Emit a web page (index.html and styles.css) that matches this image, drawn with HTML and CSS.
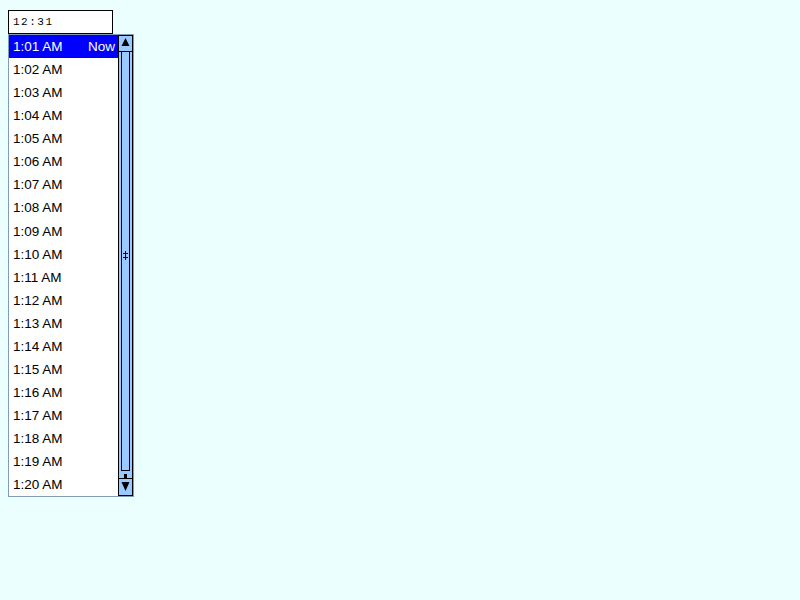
FILE: index.html
```html
<!DOCTYPE html>
<html>
<head>
<meta charset="utf-8">
<link rel="stylesheet" href="styles.css">
</head>
<body>
<div class="picker">
  <div class="field">12:31</div>
  <div class="list">
    <div class="rows">
      <div class="row sel"><span>1:01 AM</span><span>Now</span></div>
      <div class="row"><span>1:02 AM</span></div>
      <div class="row"><span>1:03 AM</span></div>
      <div class="row"><span>1:04 AM</span></div>
      <div class="row"><span>1:05 AM</span></div>
      <div class="row"><span>1:06 AM</span></div>
      <div class="row"><span>1:07 AM</span></div>
      <div class="row"><span>1:08 AM</span></div>
      <div class="row"><span>1:09 AM</span></div>
      <div class="row"><span>1:10 AM</span></div>
      <div class="row"><span>1:11 AM</span></div>
      <div class="row"><span>1:12 AM</span></div>
      <div class="row"><span>1:13 AM</span></div>
      <div class="row"><span>1:14 AM</span></div>
      <div class="row"><span>1:15 AM</span></div>
      <div class="row"><span>1:16 AM</span></div>
      <div class="row"><span>1:17 AM</span></div>
      <div class="row"><span>1:18 AM</span></div>
      <div class="row"><span>1:19 AM</span></div>
      <div class="row"><span>1:20 AM</span></div>
    </div>
    <svg class="sb" width="15" height="461" viewBox="0 0 15 461">
      <rect x="0" y="0" width="15" height="461" fill="#99c9ff"/>
      <line x1="0.5" y1="0" x2="0.5" y2="461" stroke="#000"/>
      <line x1="14.5" y1="0" x2="14.5" y2="461" stroke="#000"/>
      <rect x="0.5" y="0.5" width="14" height="16" fill="none" stroke="#000"/>
      <polygon points="7.5,3 3.5,11 11.5,11" fill="#000"/>
      <line x1="3.5" y1="17" x2="3.5" y2="436" stroke="#000"/>
      <line x1="11.5" y1="17" x2="11.5" y2="436" stroke="#000"/>
      <line x1="3" y1="435.5" x2="12" y2="435.5" stroke="#000"/>
      <line x1="7.5" y1="216" x2="7.5" y2="225" stroke="#000"/>
      <line x1="5" y1="218.5" x2="10" y2="218.5" stroke="#000"/>
      <line x1="5" y1="222.5" x2="10" y2="222.5" stroke="#000"/>
      <rect x="6" y="439" width="3" height="4" fill="#000"/>
      <rect x="0.5" y="443.5" width="14" height="17" fill="none" stroke="#000"/>
      <polygon points="3.5,447 11.5,447 7.5,456" fill="#000"/>
    </svg>
  </div>
</div>
</body>
</html>
```
FILE: styles.css
```css
html, body {
  margin: 0;
  padding: 0;
}
body {
  background: #ebffff;
  padding: 10px 8px;
  font-family: "Liberation Sans", Arial, sans-serif;
}
.picker {
  display: flex;
  flex-direction: column;
  align-items: flex-start;
}
.field {
  box-sizing: border-box;
  width: 105px;
  height: 24px;
  border: 1px solid #000;
  background: #fff;
  font-family: "Liberation Mono", "Courier New", monospace;
  font-size: 11px;
  letter-spacing: 1.5px;
  line-height: 22px;
  padding-left: 4px;
  color: #000;
}
.list {
  display: flex;
  border: 1px solid #7f9db9;
  background: #fff;
}
.rows {
  width: 109px;
  display: flex;
  flex-direction: column;
}
.row {
  height: 23.07px;
  display: flex;
  justify-content: space-between;
  align-items: center;
  padding: 0 4px;
  font-size: 13.5px;
  color: #000;
}
.row.sel {
  background: #0000ff;
  color: #fff;
  padding-right: 3px;
}
.sb {
  display: block;
}
```
